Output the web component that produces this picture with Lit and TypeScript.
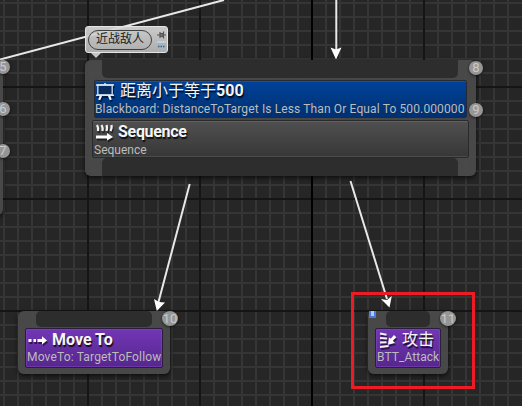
import { LitElement, html, css, svg } from "lit";
import { customElement, property } from "lit/decorators.js";

@customElement("order-badge")
class OrderBadge extends LitElement {
  @property() value = "";
  static styles = css`
    :host { position: absolute; display: flex; align-items: center; justify-content: center;
      width: 14px; height: 14px; border-radius: 50%; background: #969696; color: #c9c9c9;
      font: 13px/14px Roboto, sans-serif; box-shadow: 0 1px 3px #0009; }
  `;
  render() { return html`<span>${this.value}</span>`; }
}

@customElement("tree-icon")
class TreeIcon extends LitElement {
  @property() kind = "";
  static styles = css`
    :host { display: block; width: 20px; height: 20px; filter: drop-shadow(1px 2px 0 #0008); }
    svg { display: block; }
  `;
  render() {
    const art = this.kind === "board"
      ? svg`<path d="M1.8 4V14H16.2V4Z" fill="#082c5e" stroke="#c6d6e8" stroke-width="1.4"/>
          <path d="M0 4H18M9 2V4M0 14.2H18" stroke="#dce6f0" stroke-width="1.5"/>
          <path d="M5 14.5L3.2 18.8M13 14.5L14.8 18.8" stroke="#f2f5fa" stroke-width="2.2"/>`
      : this.kind === "sequence"
      ? svg`<path d="M3 4Q4.6 6.5 4 10M7.5 4Q9.1 6.5 8.5 10M12.5 4Q13.5 6.5 12.5 10M17.5 4Q18.2 6.5 16.5 10" fill="none" stroke="#f4f4f4" stroke-width="2.3"/>
          <path d="M2 14.5H13V12L19 16L13 19.5V17.5H2Z" fill="#fff"/>`
      : this.kind === "move"
      ? svg`<path d="M1.5 10H4.5V13H1.5ZM6.5 10H9V13H6.5ZM10.5 10H15V7.3L20 11.5L15 15.5V13H10.5Z" fill="#fff"/>`
      : svg`<path d="M3 4.5L9.5 5.7M3 9L10 9.5M3 13.5L9.5 13.2M3 18L11.5 17" stroke="#f2f2f2" stroke-width="2"/>
          <path d="M17 6L19.3 8.2L15.8 11.8L18 14L11 15.8L12 8.5L13.7 9.8Z" fill="#fff"/>`;
    return html`<svg width="20" height="20" viewBox="0 0 20 20">${art}</svg>`;
  }
}

@customElement("tree-card")
class TreeCard extends LitElement {
  @property() kind = "";
  @property() heading = "";
  @property() detail = "";
  static styles = css`
    :host { display: block; box-sizing: border-box; border: 1px solid #2a2a2a; border-radius: 2px;
      background: linear-gradient(#505050, #373737); box-shadow: inset 0 1px #606060, inset 0 -1px #4b4b4b;
      font-family: Roboto, "Noto Sans CJK SC", sans-serif; white-space: nowrap; }
    :host([tone="blue"]) { border-color: #262b33; background: linear-gradient(#00429a, #00306f); box-shadow: inset 0 1px #1751a2; }
    :host([tone="purple"]) { border-color: #2b1d3c; background: linear-gradient(#7236b6, #56278d); box-shadow: inset 0 0 0 1px #7f48ba88; }
    .top { display: flex; height: 21px; gap: 4px; padding-left: 1px; }
    .name { font-size: 16px; line-height: 21px; font-weight: 700; color: #f5f5f5; text-shadow: 1px 2px 1px #000c; letter-spacing: var(--name-track, 0); }
    :host([tone="purple"]) .top { gap: 5px; }
    :host([tone="blue"]) .name { line-height: 19px; }
    .cjk { font-weight: 400; }
    .detail { font-size: 12px; line-height: 14px; color: #bcbcbc; padding-left: var(--inset, 1px); letter-spacing: var(--track, 0); }
    :host([tone="purple"]) .detail { line-height: 15px; }
    :host([kind="sequence"]) .detail { line-height: 17px; }
  `;
  render() {
    const parts = this.heading.match(/[\u4e00-\u9fff]+|[^\u4e00-\u9fff]+/g) ?? [];
    return html`<div class="top"><tree-icon .kind=${this.kind}></tree-icon>
      <div class="name">${parts.map(p => /[\u4e00-\u9fff]/.test(p) ? html`<span class="cjk">${p}</span>` : p)}</div></div>
      <div class="detail">${this.detail}</div>`;
  }
}

@customElement("app-root")
class AppRoot extends LitElement {
  static styles = css`
    :host { display: block; position: relative; width: 522px; height: 406px; overflow: hidden; background: #262626; font-family: Roboto, "Noto Sans CJK SC", sans-serif; }
    .canvas, .wires { position: absolute; inset: 0; display: block; }
    .node { position: absolute; box-sizing: border-box; display: flex; flex-direction: column; background: #4a4a4af5; border-radius: 6px; box-shadow: 0 2px 5px #000a; }
    .edge { left: -40px; top: 60px; width: 43px; height: 155px; }
    .composite { left: 85px; top: 60px; width: 391px; height: 116px; }
    .composite .pin { height: 18px; margin: 0 18px 0 17px; }
    .composite tree-card { height: 38px; margin: 0 7px; --name-track: -.3px; }
    .composite tree-card[tone] { height: 38px; margin: 2px 9px 2px 9px; --track: .13px; --inset: 0; --name-track: 0; }
    .task { top: 311px; height: 63px; padding: 0 7px; }
    .task .pin { height: 16px; margin: 0 11px; }
    .task tree-card { height: 40px; margin-top: 1px; --track: .16px; }
    .attack tree-card { --track: .06px; }
    .move { left: 18px; width: 152px; }
    .attack { left: 368px; width: 80px; }
    .pin { flex: none; background: #2d2d2d; border-radius: 5px; }
    .composite .first { border-radius: 0 0 5px 5px; }
    .composite .last { border-radius: 5px 5px 0 0; }
    .b5 { left: -4px; top: 60px } .b6 { left: -4px; top: 102px } .b7 { left: -4px; top: 144px }
    .b8 { left: 469px; top: 61px } .b9 { left: 469px; top: 103px }
    .b10 { left: 162px; top: 311px; width: 16px; height: 15px }
    .b11 { left: 440px; top: 311px; width: 16px; height: 15px }
    .bubble { position: absolute; left: 85px; top: 26px; width: 83px; height: 27px; box-sizing: border-box; display: flex; align-items: center; gap: 5px; padding-left: 2px; border-radius: 3px; background: linear-gradient(#dadadae8, #bbbbbbe8); border: 1px solid #e4e4e4; }
    .pill { flex: none; box-sizing: border-box; width: 64px; height: 20px; border: 1px solid #404040; border-radius: 10px; font-size: 12px; line-height: 17px; text-align: center; color: #222; }
    .tail { position: absolute; left: 91px; top: 53px; width: 10px; height: 5px; background: #c4c4c4; clip-path: polygon(0 0, 100% 0, 50% 100%); }
    .mark { position: absolute; left: 369px; top: 311px; width: 7px; height: 7px; display: flow-root; background: linear-gradient(90deg, #4f7df0 35%, #a9cbff 35% 75%, #547cdb 75%); }
    .mark::after { content: ""; display: block; height: 2px; margin-top: 5px; background: #4f78cf; }
    .frame { position: absolute; left: 351px; top: 292px; width: 124px; height: 97px; box-sizing: border-box; border: 3px solid #ed1c24; }
  `;
  render() {
    const ticks = (start: number, end: number) =>
      Array.from({ length: Math.ceil((end - start) / 14) }, (_, i) => start + i * 14);
    return html`
      <svg class="canvas" width="522" height="406">
        ${ticks(4, 522).map(x => svg`<rect x=${x - 1} width="2" height="406" fill="#353535"/>`)}
        ${ticks(3, 406).map(y => svg`<rect y=${y - 1} width="522" height="2" fill="#353535"/>`)}
        ${[87, 199, 311].map(y => svg`<rect y=${y - 1} width="522" height="2" fill="#151515"/>`)}
        ${[88, 200, 424].map(x => svg`<rect x=${x - 1} width="2" height="406" fill="#151515"/>`)}
        <rect x="311" width="2" height="406" fill="#000"/>
      </svg>
      <svg class="wires" width="522" height="406">
        <g stroke="#e8e8e8" stroke-width="2">
          <path d="M0 59.5L224 0M336.3 0V50M189.7 184L158.5 302M350.5 181L387 299"/>
        </g>
        <g fill="#fff">
          <path d="M336 59.5L330.5 47.5L336 49.5L341.5 47.5Z"/>
          <path d="M156.8 311L154 299L159 302L165 302.5Z"/>
          <path d="M389.5 307.5L381 299L387 300L391.8 296Z"/>
        </g>
      </svg>
      <div class="node edge"></div>
      <div class="node composite">
        <div class="pin first"></div>
        <tree-card tone="blue" kind="board" heading="距离小于等于500" detail="Blackboard: DistanceToTarget Is Less Than Or Equal To 500.000000"></tree-card>
        <tree-card kind="sequence" heading="Sequence" detail="Sequence"></tree-card>
        <div class="pin last"></div>
      </div>
      <div class="node task move"><div class="pin"></div>
        <tree-card tone="purple" kind="move" heading="Move To" detail="MoveTo: TargetToFollow"></tree-card></div>
      <div class="node task attack"><div class="pin"></div>
        <tree-card tone="purple" kind="attack" heading="攻击" detail="BTT_Attack"></tree-card></div>
      ${[5, 6, 7, 8, 9, 10, 11].map(n => html`<order-badge class="b${n}" .value=${String(n)}></order-badge>`)}
      <div class="bubble"><div class="pill">近战敌人</div>
        <svg width="10" height="20"><path d="M0 5H3M3 2V8M3 3.5H6V6.5H3M6.5 1.5V8.5M6.5 5H9" stroke="#555" fill="#777" stroke-width="1.2"/>
          <rect y="11" width="9" height="8" fill="#a5b4bf"/><path d="M0 12H9" stroke="#dfe8ee"/><path d="M1 16.5H8" stroke="#466078" stroke-width="1.5" stroke-dasharray="1.5 1"/></svg>
      </div>
      <div class="tail"></div>
      <div class="mark"></div>
      <div class="frame"></div>`;
  }
}
